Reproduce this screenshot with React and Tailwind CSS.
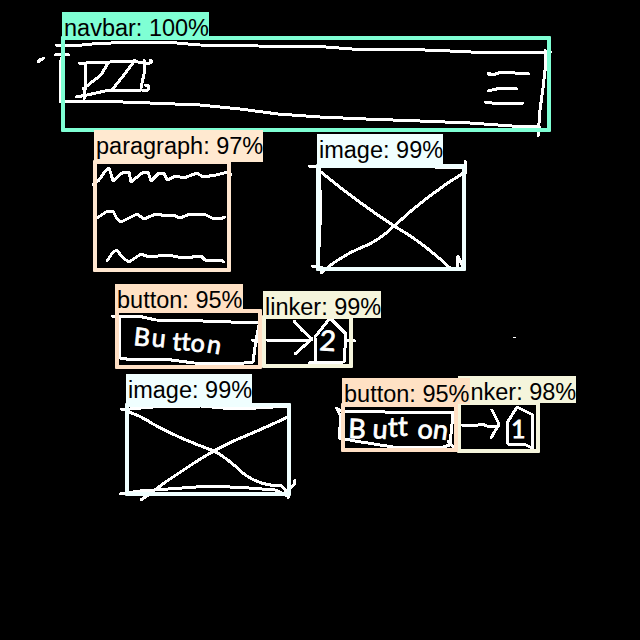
import React from "react";

const detections = [
  { label: "navbar: 100%", box: "left-[61px] top-[36px] w-[490px] h-[96px] border-[#7fffd4]", tag: "left-[62px] top-[12px] w-[147px] h-[27px] bg-[#7fffd4]" },
  { label: "paragraph: 97%", box: "left-[93px] top-[160px] w-[138px] h-[112px] border-[#ffe6cf]", tag: "left-[94px] top-[130px] w-[169px] h-[32px] bg-[#ffe9d0]" },
  { label: "image: 99%", box: "left-[316px] top-[164px] w-[150px] h-[107px] border-[#f0ffff]", tag: "left-[317px] top-[134px] w-[126px] h-[31px] bg-[#f0ffff]" },
  { label: "button: 95%", box: "left-[115px] top-[309px] w-[147px] h-[60px] border-[#ffdfc4]", tag: "left-[115px] top-[284px] w-[128px] h-[27px] bg-[#ffe1c4]" },
  { label: "linker: 99%", box: "left-[262px] top-[315px] w-[91px] h-[53px] border-[#f5f5dc]", tag: "left-[263px] top-[291px] w-[118px] h-[27px] bg-[#f5f5dc]" },
  { label: "image: 99%", box: "left-[125px] top-[403px] w-[166px] h-[93px] border-[#f0ffff]", tag: "left-[126px] top-[374px] w-[126px] h-[30px] bg-[#f0ffff]" },
  { label: "linker: 98%", box: "left-[457px] top-[401px] w-[83px] h-[52px] border-[#f5f5dc]", tag: "left-[458px] top-[376px] w-[118px] h-[27px] bg-[#f5f5dc]" },
  { label: "button: 95%", box: "left-[341px] top-[403px] w-[117px] h-[49px] border-[#ffdfc4]", tag: "left-[342px] top-[378px] w-[128px] h-[26px] bg-[#ffe1c4]" },
];

const strokes = [
  // navbar outline
  "M56 45 L72 46 L92 44 L130 42 L165 42 L200 45 L258 46 L326 47 L352 49 L400 49 L450 51 L492 53 L551 52",
  "M62 57 L60 63 L60 102",
  "M55 55 L60 54 L69 55",
  "M64 102 L95 101 L150 103 L200 105 L240 109 L278 114 L320 117 L366 119 L420 121 L470 123 L512 126 L540 127",
  "M545 50 L546 62 L543 88 L540 110 L538 136",
  "M38 62 L41 59 M39 61 L44 58",
  // logo placeholder
  "M79 63 L86 63 L110 62 L133 61 L148 64 L152 62 L150 60",
  "M85 63 L86 82 L84 99",
  "M108 63 L101 75 L83 89",
  "M135 60 L124 75 L112 90",
  "M144 60 L144 74 L141 88",
  "M76 97 L87 95 L105 91 L142 90 L148 90 L149 86 L145 85",
  // menu icon
  "M488 73 L493 75 L501 72 L529 74 M488 74 L491 74",
  "M488 91 L501 88 L517 89",
  "M485 102 L492 103 L523 103",
  // paragraph squiggles
  "M93 185 L99 180 L106 170 L109 168 L111 174 L113 181 L122 173 L129 172 L131 182 L142 173 L148 172 L151 181 L159 173 L164 173 L167 180 L176 176 L184 178 L197 173 L203 177 L216 175 L228 172 L231 175",
  "M97 218 L106 212 L113 211 L117 219 L121 222 L137 214 L144 219 L156 214 L167 216 L173 215 L180 218 L190 214 L204 214 L212 218 L220 219 L225 217",
  "M107 261 L113 252 L117 250 L123 258 L129 262 L141 254 L149 257 L167 255 L184 258 L201 256 L205 260 L221 260 L224 262",
  // first picture placeholder
  "M309 166 L330 166 L370 166 L420 166 L450 168 L466 167",
  "M319 165 L320 190 L320 225 L318 270",
  "M465 161 L465 174 L463 205 L463 268",
  "M312 266 L323 268 L360 269 L400 268 L463 270",
  "M321 172 Q356 201 394 226 Q424 243 451 269",
  "M465 172 Q430 193 394 226 Q378 242 358 249 Q338 258 321 273",
  "M457 270 L458 256 L463 267 M321 268 L327 268",
  // first button
  "M112 316 L138 316 L156 320 L203 321 L259 323",
  "M119 317 L120 358 L133 360 L164 359 L194 363 L235 364 L253 362 L256 340 L259 325",
  "M252 340 L260 342",
  // first link arrow and tag
  "M267 340 L292 341 L310 340",
  "M294 321 L302 330 L312 339 L304 346 L295 354",
  "M315 337 L330 318 L346 334 L344 362 L309 363",
  "M315 338 L315 361 M346 340 L355 341",
  // second picture placeholder
  "M121 409 L130 409 L153 407 L201 406 L223 408 L240 409 L289 406",
  "M128 410 L127 445 L127 494",
  "M120 494 L140 491 L182 488 L210 486 L249 488 L275 490 L288 496",
  "M127 412 Q136 413 153 424 Q178 438 214 451 Q226 457 244 474 Q260 486 282 486 L285 490",
  "M288 417 Q258 431 238 439 Q211 451 185 469 L164 483 L151 493 L141 500",
  "M288 404 L288 440 L288 498 M285 492 L294 485 L295 480",
  // second button
  "M336 408 L342 411 L374 411 L396 413 L454 412",
  "M337 409 L341 417 L339 438 L355 441 L393 447 L443 447 L450 445 L453 413",
  "M448 441 L455 449",
  // second link arrow and tag
  "M462 425 L478 425 L482 424 L487 426 L499 426",
  "M492 410 L499 424 L491 438",
  "M507 423 L517 407 L533 415 L532 430 L532 449 M507 423 L508 444 L524 444 L532 448",
];

function Sketch() {
  return (
    <svg className="absolute inset-0" width="640" height="640" viewBox="0 0 640 640" fill="none">
      <g stroke="#fff" strokeWidth="3" strokeLinejoin="round" strokeLinecap="round" shapeRendering="crispEdges">
        {strokes.map((d) => (
          <path key={d} d={d} />
        ))}
      </g>
      <rect x="513" y="337" width="3" height="1" fill="#fff" />
      <g fill="#fff" stroke="#fff" strokeWidth="0.8" fontFamily="Lato, 'Liberation Sans', sans-serif">
        <text x="133 151 172 181 190 206" y="345 346 350 350 351 352" rotate="6 6 4 4 6 10" fontSize="25">Button</text>
        <text x="348 372 388 398 417 432" y="438 438 437 436 438 438" rotate="2 4 0 0 4 8" fontSize="27">Button</text>
        <text x="319" y="350" fontSize="28" rotate="4">2</text>
        <text x="511" y="438" fontSize="25">1</text>
      </g>
    </svg>
  );
}

export default function App() {
  return (
    <main className="relative h-[640px] w-[640px] overflow-hidden bg-black font-['Liberation_Sans',Arial,sans-serif]">
      <Sketch />
      {detections.map((d) => (
        <React.Fragment key={d.box}>
          <div className={`absolute border-[4px] rounded-[1px] ${d.box}`} />
          <div className={`absolute whitespace-nowrap pl-[2px] pt-[2px] text-[23.5px] leading-[28px] text-black ${d.tag}`}>{d.label}</div>
        </React.Fragment>
      ))}
    </main>
  );
}
